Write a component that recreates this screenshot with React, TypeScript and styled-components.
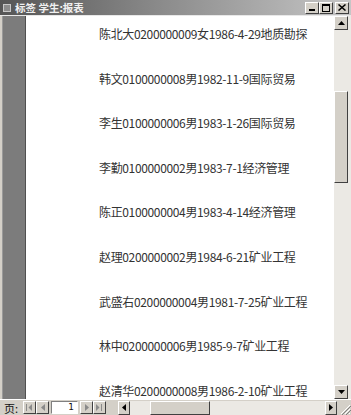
import styled, { createGlobalStyle } from "styled-components";

const rows = [
  "陈北大0200000009女1986-4-29地质勘探",
  "韩文0100000008男1982-11-9国际贸易",
  "李生0100000006男1983-1-26国际贸易",
  "李勤0100000002男1983-7-1经济管理",
  "陈正0100000004男1983-4-14经济管理",
  "赵理0200000002男1984-6-21矿业工程",
  "武盛右0200000004男1981-7-25矿业工程",
  "林中0200000006男1985-9-7矿业工程",
  "赵清华0200000008男1986-2-10矿业工程",
];

const GlobalStyle = createGlobalStyle`
  html, body {
    margin: 0;
    padding: 0;
    background: #d4d0c8;
  }
`;

const Window = styled("div")`
  width: 351px;
  height: 415px;
  display: flex;
  flex-direction: column;
  background: #d4d0c8;
  box-sizing: border-box;
  overflow: hidden;
  font-family: "Noto Sans CJK SC", "DejaVu Sans", sans-serif;
`;

const TitleBar = styled("div")`
  height: 16px;
  display: flex;
  align-items: center;
  padding: 0 2px 0 3px;
  background: linear-gradient(to right, #555555, #8a8a8a 45%, #c6c6c6);
  border-bottom: 1px solid #e8e8e8;
  box-sizing: border-box;
`;

const TitleIcon = styled("span")`
  width: 6px;
  height: 6px;
  border: 1px solid #c8c8c8;
  background: #8c8c8c;
  margin-right: 4px;
`;

const TitleText = styled("span")`
  color: #f0f0f0;
  font-size: 10.5px;
  font-weight: bold;
  flex: 1;
  line-height: 14px;
  white-space: pre;
`;

const CaptionButton = styled("span")<{ $gap?: boolean }>`
  width: 14px;
  height: 12px;
  margin-left: ${(p) => (p.$gap ? "2px" : "0")};
  background: #d4d0c8;
  border: 1px solid;
  border-color: #fff #404040 #404040 #fff;
  box-sizing: border-box;
  display: flex;
  align-items: center;
  justify-content: center;
`;

const Body = styled("div")`
  flex: 1;
  display: flex;
  min-height: 0;
  padding-left: 2px;
`;

const SideBar = styled("div")`
  width: 24px;
  background: #7c7c7c;
  border-left: 1px solid #9a9a9a;
  border-right: 1px solid #505050;
  box-sizing: border-box;
`;

const Page = styled("div")`
  flex: 1;
  background: #fff;
  padding: 10px 0 0 73px;
  overflow: hidden;
`;

const Row = styled("div")`
  height: 44.6px;
  line-height: 16px;
  font-size: 12px;
  color: #333;
  white-space: nowrap;
  letter-spacing: -0.35px;
`;

const VScroll = styled("div")`
  width: 16px;
  display: flex;
  flex-direction: column;
  background: #ebe9e4;
  padding-right: 1px;
`;

const ArrowButton = styled("div")<{ $w?: number; $h?: number }>`
  width: ${(p) => p.$w ?? 14}px;
  height: ${(p) => p.$h ?? 14}px;
  flex-shrink: 0;
  background: #d4d0c8;
  border: 1px solid;
  border-color: #fff #404040 #404040 #fff;
  box-sizing: border-box;
  display: flex;
  align-items: center;
  justify-content: center;
`;

const VTrack = styled("div")`
  flex: 1;
  display: flex;
  flex-direction: column;
  padding-top: 61px;
`;

const VThumb = styled("div")`
  width: 14px;
  height: 92px;
  background: #d4d0c8;
  border: 1px solid;
  border-color: #fff #404040 #404040 #fff;
  box-sizing: border-box;
`;

const BottomBar = styled("div")`
  height: 16px;
  display: flex;
  align-items: center;
  padding-left: 4px;
  background: #d4d0c8;
  border-top: 1px solid #fff;
  box-sizing: border-box;
`;

const PageLabel = styled("span")`
  font-size: 11px;
  color: #111;
  margin-right: 5px;
  line-height: 14px;
`;

const NavButton = styled(ArrowButton)`
  width: 13px;
  height: 13px;
`;

const PageInput = styled("div")`
  width: 27px;
  height: 13px;
  margin: 0 2px;
  background: #fff;
  border: 1px solid;
  border-color: #808080 #fff #fff #808080;
  box-sizing: border-box;
  font-size: 9px;
  line-height: 11px;
  text-align: right;
  padding-right: 3px;
  font-family: "DejaVu Sans", sans-serif;
  color: #111;
`;

const HScroll = styled("div")`
  flex: 1;
  display: flex;
  align-items: center;
  margin-left: 12px;
  height: 14px;
  background: #ebe9e4;
`;

const HThumb = styled("div")`
  width: 60px;
  height: 14px;
  margin-left: 20px;
  background: #d4d0c8;
  border: 1px solid;
  border-color: #fff #404040 #404040 #fff;
  box-sizing: border-box;
`;

const Spacer = styled("div")`
  flex: 1;
`;

const Grip = styled("div")`
  width: 14px;
  height: 14px;
  display: flex;
  align-items: flex-end;
  justify-content: flex-end;
`;

function Tri({ dir, color = "#000" }: { dir: "up" | "down" | "left" | "right"; color?: string }) {
  const pts = {
    up: "0,4 7,4 3.5,0",
    down: "0,0 7,0 3.5,4",
    left: "4,0 4,7 0,3.5",
    right: "0,0 0,7 4,3.5",
  }[dir];
  const vertical = dir === "up" || dir === "down";
  return (
    <svg width={vertical ? 7 : 4} height={vertical ? 4 : 7}>
      <polygon points={pts} fill={color} />
    </svg>
  );
}

function EdgeTri({ dir }: { dir: "first" | "last" }) {
  // arrow with a bar, used by the first/last record buttons
  return (
    <svg width="7" height="7">
      {dir === "first" ? (
        <>
          <rect x="0" y="0" width="1" height="7" fill="#8a8a8a" />
          <polygon points="6,0 6,7 2.5,3.5" fill="#8a8a8a" />
        </>
      ) : (
        <>
          <polygon points="0,0 0,7 3.5,3.5" fill="#8a8a8a" />
          <rect x="5" y="0" width="1" height="7" fill="#8a8a8a" />
        </>
      )}
    </svg>
  );
}

function App() {
  return (
    <>
      <GlobalStyle />
      <Window>
        <TitleBar>
          <TitleIcon />
          <TitleText>标签 学生:报表</TitleText>
          <CaptionButton>
            <svg width="6" height="6">
              <rect x="0" y="4" width="6" height="2" fill="#000" />
            </svg>
          </CaptionButton>
          <CaptionButton>
            <svg width="8" height="8">
              <rect x="0.5" y="0.5" width="7" height="7" fill="none" stroke="#000" />
              <rect x="0" y="0" width="8" height="2" fill="#000" />
            </svg>
          </CaptionButton>
          <CaptionButton $gap>
            <svg width="8" height="7">
              <path d="M0.5 0.5 L7.5 6.5 M7.5 0.5 L0.5 6.5" stroke="#000" strokeWidth="1.5" />
            </svg>
          </CaptionButton>
        </TitleBar>
        <Body>
          <SideBar />
          <Page>
            {rows.map((r) => (
              <Row key={r}>{r}</Row>
            ))}
          </Page>
          <VScroll>
            <ArrowButton>
              <Tri dir="up" />
            </ArrowButton>
            <VTrack>
              <VThumb />
            </VTrack>
            <ArrowButton>
              <Tri dir="down" />
            </ArrowButton>
          </VScroll>
        </Body>
        <BottomBar>
          <PageLabel>页:</PageLabel>
          <NavButton>
            <EdgeTri dir="first" />
          </NavButton>
          <NavButton>
            <Tri dir="left" color="#8a8a8a" />
          </NavButton>
          <PageInput>1</PageInput>
          <NavButton>
            <Tri dir="right" color="#8a8a8a" />
          </NavButton>
          <NavButton>
            <EdgeTri dir="last" />
          </NavButton>
          <HScroll>
            <ArrowButton $w={12}>
              <Tri dir="left" />
            </ArrowButton>
            <HThumb />
            <Spacer />
            <ArrowButton $w={12}>
              <Tri dir="right" />
            </ArrowButton>
          </HScroll>
          <Grip>
            <svg width="12" height="12">
              <path d="M11 2 L2 11 M11 6 L6 11 M11 10 L10 11" stroke="#fff" strokeWidth="1" />
              <path d="M12 3 L3 12 M12 7 L7 12" stroke="#808080" strokeWidth="1" />
            </svg>
          </Grip>
        </BottomBar>
      </Window>
    </>
  );
}

export default App;
